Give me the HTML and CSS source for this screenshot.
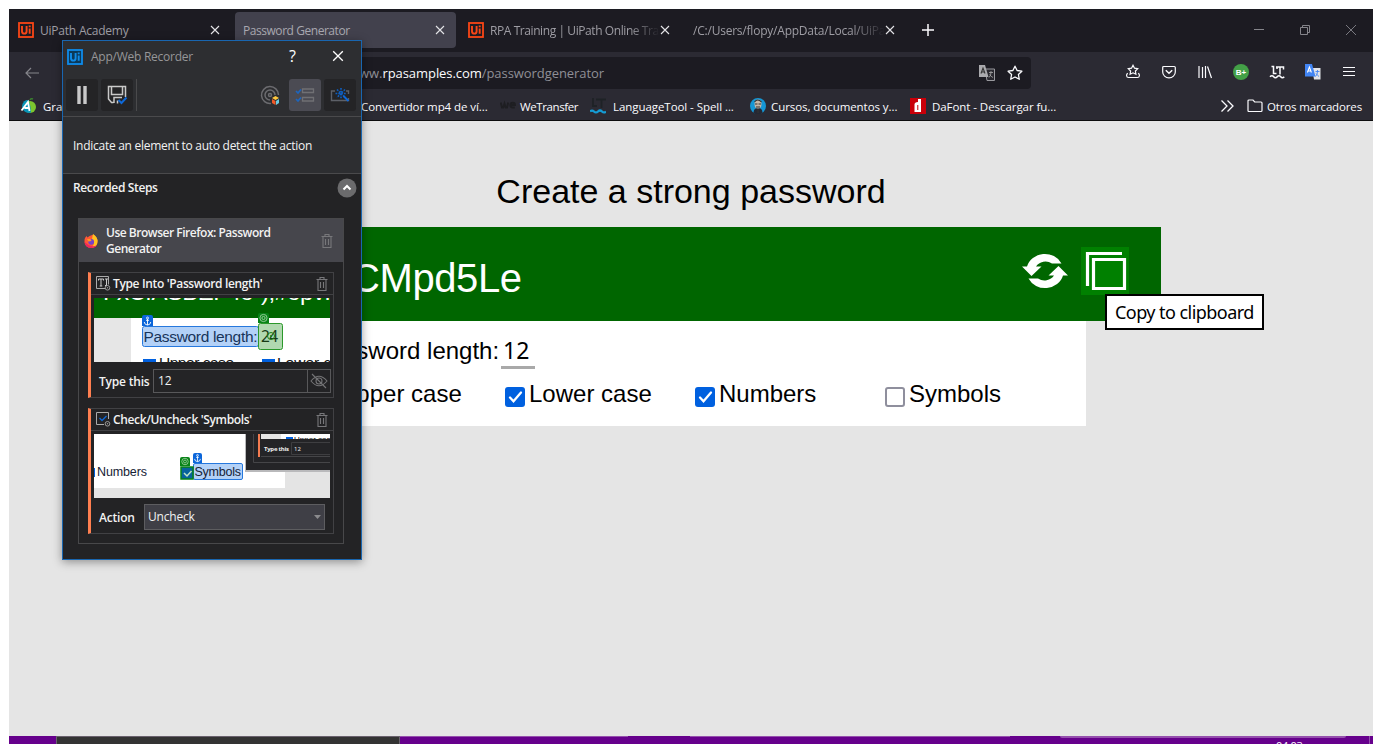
FILE: index.html
```html
<!DOCTYPE html>
<html lang="es">
<head>
<meta charset="utf-8">
<title>Password Generator</title>
<link rel="stylesheet" href="styles.css">
</head>
<body>
<svg class="defs" width="0" height="0">
  <defs>
    <symbol id="x" viewBox="0 0 10 10"><path d="M1 1l8 8M9 1l-8 8" fill="none" stroke="currentColor" stroke-width="1.1"/></symbol>
    <symbol id="trash" viewBox="0 0 12 14"><path d="M.5 2.500h11M4 2.500v-2h4v2M2 2.500v11h8v-11M4.500 5v6M7.500 5v6" fill="none" stroke="#77777a" stroke-width="1.1"/></symbol>
    <symbol id="ui" viewBox="0 0 16 16"><rect x="1" y="1" width="14" height="14" fill="none" stroke="currentColor" stroke-width="1.8"/><path d="M4 4v5.200q0 2.400 2.300 2.400t2.300-2.400V4M11.700 6.500v5.200M11.700 3.400v1.800" fill="none" stroke="currentColor" stroke-width="1.9"/></symbol>
    <symbol id="anchor" viewBox="0 0 10 10"><path d="M5 3v6M3.500 4.300h3M1.700 6q.5 3 3.300 3t3.300-3" fill="none" stroke="#fff" stroke-width=".9"/><circle cx="5" cy="2" r="1" fill="none" stroke="#fff" stroke-width=".8"/></symbol>
    <symbol id="target" viewBox="0 0 10 10"><g fill="none" stroke="#b5dcb5" stroke-width=".8"><circle cx="5" cy="5" r="3.600"/><circle cx="5" cy="5" r="1.600"/></g></symbol>
  </defs>
</svg>
<div class="browser">
  <header class="tabs">
    <div class="tab"><svg class="i16 orange"><use href="#ui"/></svg><span class="tab-name s1">UiPath Academy</span><svg class="close"><use href="#x"/></svg></div>
    <div class="tab active"><span class="tab-name s2">Password Generator</span><svg class="close"><use href="#x"/></svg></div>
    <div class="tab"><svg class="i16 orange"><use href="#ui"/></svg><span class="tab-name fade s3">RPA Training | UiPath Online Training</span><svg class="close"><use href="#x"/></svg></div>
    <div class="tab"><span class="tab-name fade s4">/C:/Users/flopy/AppData/Local/UiPath</span><svg class="close"><use href="#x"/></svg></div>
    <svg class="plus" viewBox="0 0 12 12"><path d="M6 0v12M0 6h12" stroke="#fbfbfe" stroke-width="1.500"/></svg>
    <div class="controls">
      <svg viewBox="0 0 10 10"><path d="M0 4.500h10" stroke="#85858b"/></svg>
      <svg viewBox="0 0 10 10"><path d="M.5 2.500h7v7h-7zM2.500 2.500v-2h7v7h-2" fill="none" stroke="#85858b"/></svg>
      <svg viewBox="0 0 10 10"><path d="M0 0l10 10M10 0L0 10" stroke="#85858b" stroke-width=".9"/></svg>
    </div>
  </header>
  <nav class="nav">
    <svg class="back" viewBox="0 0 50 12"><path d="M14 6H1M6 1L1 6l5 5M37 6h12" fill="none" stroke="#85858b" stroke-width="1.200"/></svg>
    <div class="url">
      <span class="address">www.<b>rpasamples.com</b>/passwordgenerator</span>
      <svg class="i16" viewBox="0 0 16 16"><path d="M6 4h9.500v11.500H8z" fill="#29282f" stroke="#99999e"/><path d="M0 0h6l3.500 12H0z" fill="#aaaaae"/><path d="M2 8.500L4 3l2 5.500M2.700 7h2.700" fill="none" stroke="#333" stroke-width="1.100"/><path d="M10 7.500h4M12 6v1.500q0 3-2 5M10.500 9.500q1.500 2 3.500 3" fill="none" stroke="#aaa" stroke-width=".8"/></svg>
      <svg class="i16" viewBox="0 0 16 16"><path d="M8 1.200l2.100 4.300 4.800.7-3.500 3.300.9 4.800L8 12l-4.300 2.300.9-4.800L1.100 6.200l4.800-.7z" fill="none" stroke="#fbfbfe" stroke-width="1.300" stroke-linejoin="round"/></svg>
    </div>
    <div class="tools">
      <svg viewBox="0 0 16 16"><path d="M8 1.300l1.500 2.900 3.200.5-2.300 2.300.5 3.200L8 8.800l-2.900 1.400.5-3.200L3.300 4.700l3.200-.5zM2.800 9.300c-1.800 1-1.600 4.200.7 4.200h9c2.300 0 2.500-3.200.7-4.200" fill="none" stroke="#fbfbfe" stroke-width="1.200"/></svg>
      <svg viewBox="0 0 16 16"><path d="M1.700 3.500q0-1 1-1h10.600q1 0 1 1V8a6.300 5.800 0 0 1-12.600 0z" fill="none" stroke="#fbfbfe" stroke-width="1.200"/><path d="M4.800 6.300L8 9.300l3.200-3" fill="none" stroke="#fbfbfe" stroke-width="1.500"/></svg>
      <svg viewBox="0 0 16 16"><path d="M2 2v12M5.500 3v11M8.500 2v12M10.500 2.500l4 11.500" fill="none" stroke="#fbfbfe" stroke-width="1.200"/></svg>
      <svg viewBox="0 0 16 16"><circle cx="8" cy="8" r="8" fill="#43a047"/><text x="8" y="11" class="bplus">B+</text></svg>
      <svg viewBox="0 0 16 16"><path d="M2.500 2.500h2v7h3M7 3h7.500v2.500M11 3v7.500M8 5V3" fill="none" stroke="#fbfbfe" stroke-width="1.500"/><path d="M1 12.800q2-2 3.700 0t3.500 0 3.500 0 3.500 0" fill="none" stroke="#fbfbfe" stroke-width="1.600"/></svg>
      <svg viewBox="0 0 16 16"><path d="M7 4h8.500v11.500H9z" fill="#e2e3e8"/><path d="M0 0h7l3.500 12.500H0z" fill="#4285f4"/><path d="M2.400 8.500L4.400 3l2 5.500M3 7h2.700" fill="none" stroke="#fff" stroke-width="1.100"/><path d="M10.500 7.500h4M12.500 6v1.500q0 3-2 5M11 9.500q1.500 2 3 3" fill="none" stroke="#4285f4" stroke-width=".9"/></svg>
      <svg viewBox="0 0 16 16"><path d="M2 3.500h12M2 7.500h12M2 11.500h12" stroke="#fbfbfe" stroke-width="1.200"/></svg>
    </div>
  </nav>
  <div class="bookmarks">
    <div class="bm bm-first"><svg class="i16" viewBox="0 0 16 16"><circle cx="10" cy="9" r="6" fill="#7cc62f"/><path d="M6.500 2A6.500 6.500 0 1 0 11 14.500Q11 8 8.500 2.300z" fill="#0794b8"/><path d="M1.500 12.500L8 4l1.500 9M4.500 10h5" fill="none" stroke="#fff" stroke-width="1.800"/><path d="M10 2q1-2 3-1" stroke="#397d2e" fill="none" stroke-width="1.500"/></svg><span>Gramática</span></div>
    <div class="bm bm-conv"><span>Convertidor mp4 de ví...</span></div>
    <div class="bm bm-we"><svg class="i16" viewBox="0 0 16 16"><path d="M.7 4.500l1.300 5h1.300l1.200-4 1.200 4H7l1.200-5M10 7h5q0-2.300-2.300-2.300T10.300 7t2.500 2.500h2" fill="none" stroke="#1e1e22" stroke-width="1.900"/></svg><span>WeTransfer</span></div>
    <div class="bm bm-lt"><svg class="i16" viewBox="0 0 16 16"><path d="M3 0v8h4M6 1.500h10M11.500 1v9" fill="none" stroke="#1e2226" stroke-width="1.800"/><path d="M0 13.500q2-2 4 0t4 0 4 0 4 0" fill="none" stroke="#159bd3" stroke-width="2.200"/></svg><span>LanguageTool - Spell ...</span></div>
    <div class="bm bm-cu"><svg class="i16" viewBox="0 0 16 16"><circle cx="8" cy="8" r="8" fill="#1597d5"/><path d="M3.500 15q0-5 4.500-5t4.500 5a8 8 0 0 1-9 0z" fill="#252833"/><ellipse cx="8" cy="6" rx="3.500" ry="4.500" fill="#c7b7a7"/><path d="M4.500 4q3-4 7 0M5 6h2.500M8.500 6H11M6 9h4M8 11v4" stroke="#333" fill="none" stroke-width="1.100"/></svg><span>Cursos, documentos y...</span></div>
    <div class="bm bm-da"><svg class="i16" viewBox="0 0 16 16"><path d="M0 0h16v16H0z" fill="#c90009"/><path d="M8 1h3v13H4.500V6.500Q4.500 4 8 4zM7.300 7v5h1V7z" fill="#fff" fill-rule="evenodd"/></svg><span>DaFont - Descargar fu...</span></div>
    <div class="bm bm-other"><svg class="chev" viewBox="0 0 14 12"><path d="M1.500.5L7 6l-5.500 5.500M7.500.5L13 6l-5.500 5.500" fill="none" stroke="#fbfbfe" stroke-width="1.300"/></svg><svg class="i16" viewBox="0 0 16 16"><path d="M1 3q0-1 1-1h4l1.700 2H14q1 0 1 1v7.500q0 1-1 1H2q-1 0-1-1z" fill="none" stroke="#fbfbfe" stroke-width="1.200"/></svg><span>Otros marcadores</span></div>
  </div>
  <main class="page">
    <h1>Create a strong password</h1>
    <section class="result">
      <output>CMpd5Le</output>
      <svg class="refresh" viewBox="0 0 46 38"><path d="M5 14.500A18.500 17 0 0 1 39.500 11.500L30 11.500A11 10 0 0 0 14 14.500H19.500L9.500 24 0 14.500z" fill="#fff"/><path d="M41 23.500A18.500 17 0 0 1 6.500 26.500L16 26.500A11 10 0 0 0 32 23.500H26.500L36.500 14 46 23.500z" fill="#fff"/></svg>
      <button class="copy"><svg viewBox="0 0 48 48"><path d="M6.500 39V6.500H41M12.500 12.500h31v29h-31z" fill="none" stroke="#fff" stroke-width="3.200"/></svg><span class="tip">Copy to clipboard</span></button>
    </section>
    <section class="options">
      <div class="length"><label>Password length:</label><span class="num">12</span></div>
      <div class="checks">
        <div class="check"><i class="box on"><svg viewBox="0 0 20 20"><path d="M5 10.500l3.500 3.700L16 5.500" fill="none" stroke="#fff" stroke-width="2.300" stroke-linecap="round"/></svg></i>Upper case</div>
        <div class="check"><i class="box on"><svg viewBox="0 0 20 20"><path d="M5 10.500l3.500 3.700L16 5.500" fill="none" stroke="#fff" stroke-width="2.300" stroke-linecap="round"/></svg></i>Lower case</div>
        <div class="check"><i class="box on"><svg viewBox="0 0 20 20"><path d="M5 10.500l3.500 3.700L16 5.500" fill="none" stroke="#fff" stroke-width="2.300" stroke-linecap="round"/></svg></i>Numbers</div>
        <div class="check"><i class="box"></i>Symbols</div>
      </div>
    </section>
  </main>
</div>
<footer class="taskbar"><div class="task-app"></div><div class="glow g1"></div><div class="glow g2"></div><div class="glow g3"></div><span class="clock">04:03</span><div class="desktop-edge"></div></footer>

<aside class="recorder">
  <div class="rec-title"><svg class="i16 blue"><use href="#ui"/></svg><span>App/Web Recorder</span><b>?</b><svg class="rec-x"><use href="#x"/></svg></div>
  <div class="rec-tools">
    <div class="rbtn"><svg viewBox="0 0 32 32"><path d="M13 7v18M19 7v18" stroke="#c9c9c9" stroke-width="3.400"/></svg></div>
    <div class="rbtn"><svg viewBox="0 0 32 32"><path d="M24.500 18V7.500h-17V20l3 3.500h2M10.500 8v7.500h11V8M13 24v-5.500h8M16.500 21.500v3" fill="none" stroke="#c9c9c9" stroke-width="1.500"/><path d="M17.500 21l3 3 5-5.500" fill="none" stroke="#0e68d8" stroke-width="2"/></svg></div>
    <div class="sep"></div>
    <div class="rbtn flat"><svg viewBox="0 0 32 32"><g fill="none" stroke="#6c6c70" stroke-width="1.500"><path d="M17 24.500A8.500 8.500 0 1 1 24.500 16M16 21a5 5 0 1 1 5-5"/><circle cx="16" cy="16" r="1.500"/></g><path d="M18 19l3.500-2 3.500 2-3.500 2z" fill="#ffc83d"/><path d="M18 20l3.500 2v4L18 24z" fill="#f05a28"/><path d="M25 20l-3 2v4l3-2z" fill="#69cbe0"/></svg></div>
    <div class="rbtn sel"><svg viewBox="0 0 32 32"><path d="M13.500 10h11v3.500h-11zM13.500 18.500h11V22h-11z" fill="none" stroke="#707074" stroke-width="1.300"/><path d="M7 12l2 2 3-3.500M7 20l2 2 3-3.500" fill="none" stroke="#1d65bd" stroke-width="1.700"/></svg></div>
    <div class="rbtn"><svg viewBox="0 0 32 32"><path d="M11 12H7.500v9.500h17V19M22 12h2.500v3" fill="none" stroke="#5d6067" stroke-width="1.400"/><path d="M17 9v11M11.500 14.500h11M13 10.500l8 8M21 10.500l-8 8" stroke="#0e5fc2" stroke-width="1.600" stroke-dasharray="1.800 1"/><path d="M19.500 17l5 5" stroke="#0e68d8" stroke-width="2"/></svg></div>
  </div>
  <div class="hint">Indicate an element to auto detect the action</div>
  <div class="steps">
    <div class="steps-head"><b>Recorded Steps</b><svg viewBox="0 0 20 20"><circle cx="10" cy="10" r="9.500" fill="#6b6b6d"/><path d="M6.500 11.500L10 8l3.500 3.500" fill="none" stroke="#fff" stroke-width="2"/></svg></div>
    <div class="flow">
      <div class="flow-head">
        <svg class="fox" viewBox="0 0 14 14"><path d="M1 4l1.500-2 1 1.500 2-1.500 4-1.500Q14 4 13.500 8A6.500 6 0 0 1 .5 8Q.3 5.500 1 4z" fill="#ff5736"/><path d="M9 0q5 3 4.500 8T8 13.500Q12 8 8 5z" fill="#ffc21f"/><path d="M.5 8q1 6 7 6 4 0 5.500-3-3 2-6 1T.5 8z" fill="#ed255f"/><circle cx="7.200" cy="7.800" r="2.900" fill="#7542ca"/><path d="M3 5h3.500l1 2-3 .5z" fill="#ff9a22"/></svg>
        <b>Use Browser Firefox: Password<br>Generator</b><svg class="trash"><use href="#trash"/></svg>
      </div>
      <article class="step">
        <div class="step-head"><svg class="type-icon" viewBox="0 0 15 15"><path d="M9 12.500H.5V.5h12v8" fill="none" stroke="#aaa"/><path d="M2.500 4.500V3h5v1.500M5 3v7M3.700 10h2.600M9 3h3M10.500 3v6M9 9.500h2" fill="none" stroke="#ccc"/><circle cx="11.500" cy="11.800" r="2.300" fill="none" stroke="#999"/><circle cx="11.500" cy="11.800" r=".7" fill="#999"/></svg><b class="s-type">Type Into 'Password length'</b><svg class="trash"><use href="#trash"/></svg></div>
        <svg class="thumb" viewBox="0 0 236 64">
          <path d="M0 0h236v64H0z" fill="#fff"/><path d="M0 0h37v64H0z" fill="#e6e6e6"/><path d="M0 0h236v20H0z" fill="#060"/>
          <text x="9" y="2" class="big-thumb" textLength="228">FxCfASBEF4o");#opv!</text>
          <path d="M49 61h13v3H49zM168 61h13v3h-13z" fill="#0060df"/>
          <text x="65" y="70" class="thumb-text" textLength="75">Upper case</text><text x="183" y="70" class="thumb-text">Lower case</text>
          <rect x="48.500" y="28.500" width="116" height="20" rx="2" fill="#b3d1f7" stroke="#2678dd"/>
          <text x="49.500" y="44" class="thumb-label" textLength="114">Password length:</text>
          <path d="M48 28V19q0-2 2-2h7q2 0 2 2v9z" fill="#0b66da"/><use href="#anchor" x="48.500" y="18" width="10" height="10"/>
          <rect x="164.500" y="25.500" width="24" height="26" rx="2" fill="#b1d9b0" stroke="#2b982b"/>
          <text x="167" y="44" class="thumb-num" textLength="17">24</text>
          <path d="M164 25v-8q0-2 2-2h7q2 0 2 2v8z" fill="#078316"/><use href="#target" x="164.500" y="15" width="10" height="10"/>
          <circle cx="177" cy="38" r="3.500" fill="none" stroke="#168118"/><circle cx="177" cy="38" r="1" fill="#168118"/>
        </svg>
        <div class="field"><b>Type this</b><span class="input">12</span><span class="eye"><svg viewBox="0 0 18 16"><path d="M1 8Q9-1.500 17 8 9 17.500 1 8zM2 1l14 14" fill="none" stroke="#747476" stroke-width="1.100"/><circle cx="9" cy="8" r="3" fill="none" stroke="#747476" stroke-width="1.100"/></svg></span></div>
      </article>
      <article class="step">
        <div class="step-head"><svg class="type-icon" viewBox="0 0 15 15"><path d="M8 12.500H.5V.5h12V7" fill="none" stroke="#aaa"/><path d="M3.500 6l2.500 2.500L10.500 4" fill="none" stroke="#0e68d8" stroke-width="1.300"/><circle cx="11.500" cy="11.800" r="2.300" fill="none" stroke="#999"/><circle cx="11.500" cy="11.800" r=".7" fill="#999"/></svg><b class="s-check">Check/Uncheck 'Symbols'</b><svg class="trash"><use href="#trash"/></svg></div>
        <svg class="thumb" viewBox="0 0 236 64">
          <path d="M0 0h236v64H0z" fill="#e4e4e4"/><path d="M0 0h191v54H0z" fill="#fff"/><path d="M0 34h1v9H0z" fill="#0060df"/>
          <text x="3" y="42" class="thumb-small" textLength="50">Numbers</text>
          <path d="M151 0h85v38h-85z" fill="#b9b9bb"/><path d="M152 0h84v36h-84z" fill="#242427"/><path d="M159.500 0v28.500H236M167 22.500h69" fill="none" stroke="#454548"/><path d="M167 0h69v5h-69z" fill="#e5e5e5"/><path d="M187 0h49v5h-49z" fill="#fff"/><path d="M164 0h2v23h-2z" fill="#f47b50"/><path d="M192 3h7v2h-7z" fill="#0060df"/>
          <svg x="200" y="0" width="36" height="5"><text x="0" y="8" class="mini-case">Upper case</text></svg>
          <text x="170" y="17" class="mini-label" textLength="25">Type this</text><path d="M236 8.500h-38.500v12H236" fill="none" stroke="#3e3e41"/><text x="200" y="17" class="mini-value">12</text>
          <rect x="99.500" y="29.500" width="49" height="16" rx="1.500" fill="#b3d1f7" stroke="#2678dd"/><text x="100.500" y="42" class="thumb-small" textLength="46.500">Symbols</text>
          <path d="M99 29v-8q0-2 2-2h5q2 0 2 2v8z" fill="#0b66da"/><use href="#anchor" x="99" y="19" width="9" height="10"/>
          <rect x="87" y="33" width="12" height="12" fill="#07629d" stroke="#078316" stroke-width="1.500"/><path d="M90 39l3 3 4.500-5" fill="none" stroke="#bfe6c5" stroke-width="1.500"/>
          <path d="M86 32v-7q0-2 2-2h6q2 0 2 2v7z" fill="#078316"/><use href="#target" x="86.500" y="23" width="9" height="9"/>
        </svg>
        <div class="field"><b>Action</b><span class="select">Uncheck<svg viewBox="0 0 7 4"><path d="M0 0h7L3.500 4z" fill="#8b8b8e"/></svg></span></div>
      </article>
    </div>
  </div>
</aside>
</body>
</html>
```
FILE: styles.css
```css
* { box-sizing: border-box; }
html, body { margin: 0; }
body { height: 744px; overflow: hidden; position: relative; padding: 9px 9px 0; background: #fff; font: 12px "Open Sans", "Noto Sans", sans-serif; }
svg { display: block; flex: none; }
.defs { position: absolute; }
.i16 { width: 16px; height: 16px; }
.orange { color: #fa4616; }
.blue { color: #108be8; background: #0b3959; }

.browser { height: 727px; display: flex; flex-direction: column; }
.tabs { height: 43px; display: flex; align-items: flex-start; gap: 4px; padding: 3px 0 0 1px; background: #1c1b22; }
.tab { width: 221px; height: 36px; padding: 0 11px 0 8px; display: flex; align-items: center; border-radius: 4px; color: #9e9da4; flex: none; }
.tab.active { background: #42414d; color: #a9a8b0; }
.tab-name { flex: 1; overflow: hidden; white-space: nowrap; font-size: 12px; padding-top: 1px; }
.tab .i16 + .tab-name { margin-left: 6px; }
.s1 { letter-spacing: -.22px; }
.s2 { letter-spacing: -.45px; }
.s3 { letter-spacing: -.42px; }
.s4 { letter-spacing: -.22px; }
.fade { mask-image: linear-gradient(to right, #000 82%, transparent); }
.close { width: 10px; height: 10px; color: #e4e4e8; }
.plus { width: 12px; height: 12px; margin: 12px 0 0 12px; }
.controls { display: flex; gap: 36px; margin: 13px 17px 0 auto; }
.controls svg { width: 10px; height: 10px; }

.nav { height: 37px; display: flex; align-items: center; background: #2b2a33; }
.back { width: 50px; height: 12px; margin: 4px 0 0 16px; }
.url { width: 799px; height: 32px; margin: 4px 0 0 157px; padding-right: 8px; display: flex; align-items: center; background: #1c1b22; border-radius: 4px; }
.address { flex: 1; padding-left: 117px; padding-top: 1px; color: #8f8f96; font-size: 13px; letter-spacing: -.06px; white-space: nowrap; }
.address b { font-weight: 400; color: #fbfbfe; }
.url .i16 + .i16 { margin-left: 12px; }
.tools { display: flex; gap: 20px; margin: 3px 0 0 94px; }
.tools svg { width: 16px; height: 16px; }
.bplus { font: 700 8px "Liberation Sans", sans-serif; fill: #fff; text-anchor: middle; }

.bookmarks { height: 32px; display: flex; align-items: center; background: #2b2a33; border-bottom: 1px solid #0c0c0d; color: #fbfbfe; font-size: 11.5px; letter-spacing: -.06px; padding: 3px 0 0 11px; }
.bm { display: flex; align-items: center; gap: 6px; white-space: nowrap; flex: none; }
.bm-first { width: 341px; gap: 7px; }
.bm-conv { width: 139px; }
.bm-we { width: 90px; gap: 4px; letter-spacing: -.4px; }
.bm-lt { width: 160px; gap: 7px; }
.bm-cu { width: 160px; gap: 5px; }
.bm-da { width: 310px; }
.bm-other { gap: 3px; letter-spacing: -.15px; }
.bm-other span { margin-left: 1px; }
.chev { width: 14px; height: 12px; margin-right: 10px; }

.page { flex: 1; background: #e5e5e5; display: flex; flex-direction: column; align-items: center; font-family: "Liberation Sans", Arial, sans-serif; }
h1 { margin: 50px 0 0; height: 56px; font-weight: 400; font-size: 34px; line-height: 40px; }
.result { width: 940px; height: 94px; background: #060; display: flex; align-items: center; padding-right: 32px; color: #fff; }
output { flex: 1; padding: 8px 0 0 130px; font-size: 40px; line-height: 46px; letter-spacing: -.4px; }
.refresh { width: 46px; height: 38px; margin-right: 13px; margin-top: -6px; }
.copy { position: relative; width: 48px; height: 48px; margin-top: -6px; padding: 0; border: 0; background: #008000; }
.tip { position: absolute; left: 24px; top: 47px; width: 159px; height: 36px; padding-left: 8px; border: 2px solid #000; background: #fff; color: #000; font: 18px/33px "Noto Sans", sans-serif; letter-spacing: -.55px; text-align: left; white-space: nowrap; }
.options { width: 790px; height: 105px; padding: 12px 0 0 19px; background: #fff; font-size: 24px; }
.length { display: flex; height: 36px; line-height: 36px; }
.num { width: 34px; margin-left: 2px; border-bottom: 3px solid #a9a9a9; padding-left: 2px; font: 23px/34px "Noto Sans", sans-serif; }
.checks { display: flex; padding-top: 11px; line-height: 28px; }
.check { width: 190px; display: flex; gap: 4px; flex: none; }
.check:last-child { width: 150px; }
.box { width: 20px; height: 20px; margin-top: 7px; border: 2px solid #8f8f9d; border-radius: 3px; }
.box.on { background: #0060df; border: 0; }

.taskbar { height: 8px; background: #66008c; display: flex; align-items: flex-start; overflow: hidden; padding-left: 47px; }
.task-app { width: 344px; height: 8px; background: #333; border: 1px solid #69616d; border-bottom: 0; flex: none; }
.glow { height: 1px; background: #9550ad; flex: none; }
.g1 { width: 228px; }
.g2 { width: 320px; margin-left: 62px; }
.g3 { width: 286px; height: 2px; margin-left: 50px; border-radius: 0 0 6px 6px; background: #9550ad; }
.clock { width: 26px; margin: 2px 0 0 -70px; color: #fff; font-size: 11px; letter-spacing: -.3px; flex: none; }
.desktop-edge { width: 1px; height: 8px; margin-left: auto; margin-right: 3px; background: #9550ad; }

.recorder { position: absolute; left: 62px; top: 40px; width: 300px; height: 520px; border: 1px solid #1966b0; background: #232325; color: #f2f2f2; box-shadow: 0 2px 9px rgba(0,0,0,.38); font-family: "Open Sans", "Noto Sans", sans-serif; }
.recorder b { font-weight: 600; }
.rec-title { height: 32px; background: #2d2e31; display: flex; align-items: center; padding: 0 17px 2px 4px; color: #969698; }
.rec-title .i16 { margin-top: 1px; }
.rec-title span { flex: 1; margin-left: 8px; font-size: 12px; letter-spacing: -.25px; }
.recorder .rec-title b { font-size: 16px; font-weight: 400; color: #fff; margin-right: 36px; }
.rec-x { width: 12px; height: 12px; color: #fff; }
.rec-tools { height: 44px; background: #2d2e31; border-bottom: 1px solid #4a4a4c; display: flex; gap: 3px; padding: 6px 5px 0 3px; }
.rbtn { width: 32px; height: 32px; background: #242426; border-radius: 3px; flex: none; }
.rbtn.flat { background: none; margin-left: auto; }
.rbtn.sel { background: #4b4b53; }
.sep { width: 1px; height: 32px; background: #4a4a4c; }
.hint { height: 57px; background: #2d2e31; border-bottom: 1px solid #4a4a4c; padding: 0 10px; font-size: 12px; line-height: 58px; letter-spacing: -.27px; white-space: nowrap; }
.steps { padding: 0 15px; }
.steps-head { height: 44px; margin: 0 -13px 0 -5px; padding: 4px 2px 0 0; display: flex; justify-content: space-between; font-size: 12px; line-height: 20px; letter-spacing: -.36px; }
.steps-head svg { width: 20px; height: 20px; }
.flow { width: 266px; height: 326px; border: 1px solid #48484a; }
.flow-head { height: 43px; background: #46464c; padding: 0 10px 0 5px; display: flex; align-items: center; font-size: 12px; line-height: 16px; letter-spacing: -.48px; white-space: nowrap; }
.fox { width: 14px; height: 14px; margin-right: 8px; }
.trash { width: 12px; height: 14px; margin-left: auto; }
.step { width: 246px; height: 126px; margin: 10px 0 0 9px; border: 1px solid #414144; border-left: 3px solid #ff7f50; }
.step-head { height: 22px; border-bottom: 1px solid #414144; padding: 0 5px; display: flex; align-items: center; font-size: 12px; letter-spacing: -.35px; white-space: nowrap; }
.type-icon { width: 15px; height: 15px; margin-right: 2px; }
.thumb { width: 236px; height: 64px; margin: 3px 0 0 3px; overflow: hidden; }
.big-thumb { font: 24px "Liberation Sans", sans-serif; fill: #fff; }
.thumb-text { font: 15.5px "Liberation Sans", sans-serif; fill: #111; }
.thumb-label { font: 15.5px "Liberation Sans", sans-serif; fill: #17345a; }
.thumb-num { font: 15.5px "Noto Sans", sans-serif; fill: #163b15; }
.thumb-small { font: 12.5px "Liberation Sans", sans-serif; fill: #152235; }
.mini-case { font: 8px "Liberation Sans", sans-serif; }
.mini-label { font: 700 6px "Open Sans", sans-serif; fill: #eee; }
.mini-value { font: 6px "Open Sans", sans-serif; fill: #eee; }
.field { display: flex; height: 26px; margin-top: 6px; padding-left: 8px; line-height: 26px; font-size: 12px; letter-spacing: -.2px; white-space: nowrap; }
.field b { width: 49px; line-height: 27px; flex: none; }
.field b:has(+ .select) { width: 36px; }
.input { width: 155px; height: 24px; margin: 1px 0 0 5px; padding-left: 4px; border: 1px solid #58585a; line-height: 22px; background: #242426; flex: none; }
.eye { width: 23px; height: 24px; margin-top: 1px; border: 1px solid #58585a; border-left: 0; padding: 3px 2px; flex: none; }
.eye svg { width: 18px; height: 16px; }
.select { width: 181px; height: 26px; margin-left: 9px; padding: 0 3px; background: #3f3f46; border: 1px solid #5d5d60; display: flex; align-items: center; justify-content: space-between; flex: none; }
.select svg { width: 7px; height: 4px; }
```
